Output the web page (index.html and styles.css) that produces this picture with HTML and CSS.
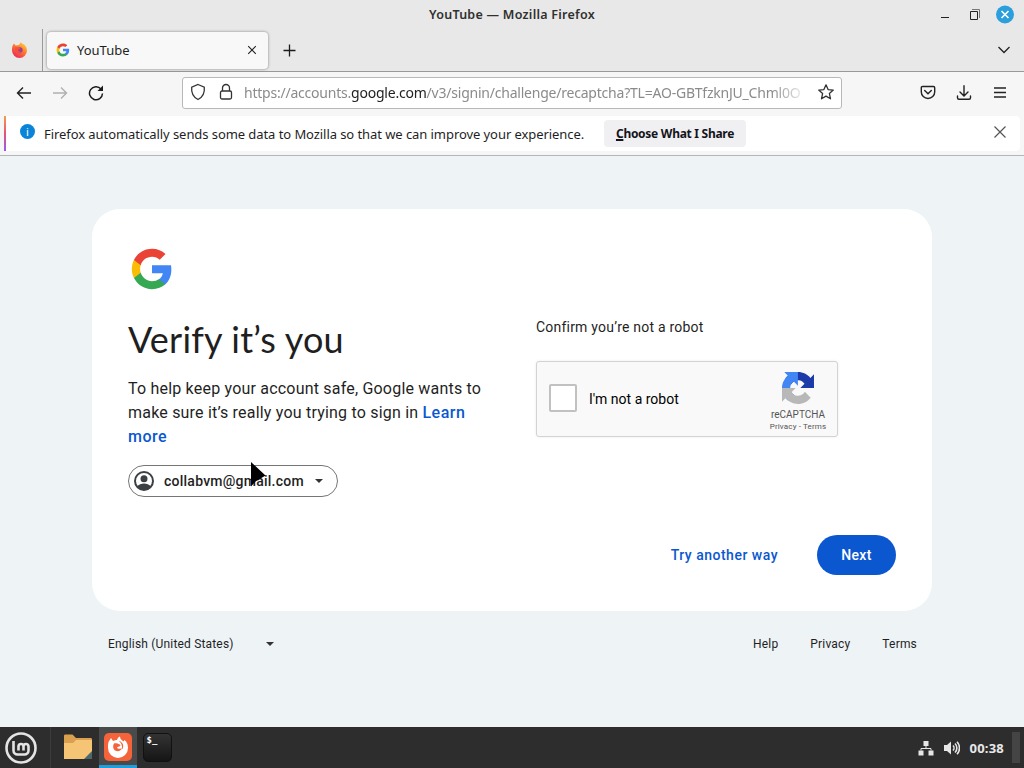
FILE: index.html
```html
<!DOCTYPE html>
<html lang="en">
<head>
  <meta charset="UTF-8" />
  <meta name="viewport" content="width=device-width, initial-scale=1.0" />
  <title>YouTube</title>
  <link rel="stylesheet" href="styles.css">
</head>
<body>
  <!-- Shared logo -->
  <svg width="0" height="0" class="defs">
    <symbol id="g-logo" viewBox="0 0 48 48">
      <path fill="#4285F4" d="M45.12 24.5c0-1.56-.14-3.06-.4-4.5H24v8.51h11.84c-.51 2.75-2.06 5.08-4.39 6.64v5.52h7.11c4.16-3.83 6.56-9.47 6.56-16.17z"/>
      <path fill="#34A853" d="M24 46c5.94 0 10.92-1.97 14.56-5.33l-7.11-5.52c-1.97 1.32-4.49 2.1-7.45 2.1-5.73 0-10.58-3.87-12.31-9.07H4.34v5.7C7.96 41.07 15.4 46 24 46z"/>
      <path fill="#FBBC05" d="M11.69 28.18C11.25 26.86 11 25.45 11 24s.25-2.86.69-4.18v-5.7H4.34C2.85 17.09 2 20.45 2 24s.85 6.91 2.34 9.88l7.35-5.7z"/>
      <path fill="#EA4335" d="M24 10.75c3.23 0 6.13 1.11 8.41 3.29l6.31-6.31C34.91 4.18 29.93 2 24 2 15.4 2 7.96 6.93 4.34 14.12l7.35 5.7c1.73-5.2 6.58-9.07 12.31-9.07z"/>
    </symbol>
  </svg>

  <header class="titlebar">
    <span class="window-title">YouTube — Mozilla Firefox</span>
    <div class="window-controls">
      <svg width="10" height="20" viewBox="0 0 10 20"><path d="M1 12.500h8" stroke="#222"/></svg>
      <svg width="12" height="20" viewBox="0 0 12 20" fill="none" stroke="#222"><path d="M1.500 6.500h7v8h-7z"/><path d="M3 4.500h7.500V13" stroke="#777"/></svg>
      <svg width="18" height="20" viewBox="0 0 18 20"><circle cx="9" cy="9.500" r="9" fill="#2b9fdc"/><path d="M5.500 6l7 7m0-7l-7 7" stroke="#fff" stroke-width="1.600"/></svg>
    </div>
  </header>

  <nav class="tabbar">
    <div class="pinned">
      <svg width="17" height="16" viewBox="0 0 17 16">
        <defs><linearGradient id="fx" x1=".9" y1="0" x2=".2" y2="1"><stop offset="0" stop-color="#ffdc3e"/><stop offset=".45" stop-color="#ff7a2e"/><stop offset="1" stop-color="#e9205f"/></linearGradient></defs>
        <path d="M1.500 4L3 1.500l1.500 2L8 3l1.500-2.500C13.500 2 16 5 16 8.500a7.500 7.500 0 0 1-15 0C1 6.500 1.200 5 1.500 4z" fill="url(#fx)"/>
        <circle cx="8.800" cy="8" r="2.800" fill="#9a3f92"/>
        <path d="M4 5.500c2-.6 4-.2 5.500 1L7 8c.5 1.500 2 1.500 3 1-1 2-5 2-6-1z" fill="#f4503c"/>
      </svg>
    </div>
    <div class="tab">
      <svg width="14" height="14"><use href="#g-logo"/></svg>
      <span class="tab-name">YouTube</span>
      <svg width="10" height="10" viewBox="0 0 10 10"><path d="M1.200 1.200l7.600 7.600m0-7.600L1.200 8.800" stroke="#222" stroke-width="1.100"/></svg>
    </div>
    <svg class="new-tab" width="13" height="13" viewBox="0 0 13 13"><path d="M6.500.5v12M.5 6.500h12" stroke="#1b1b1b" stroke-width="1.300"/></svg>
    <svg class="all-tabs" width="14" height="8" viewBox="0 0 14 8"><path d="M1.500 1l5.500 5.500L12.500 1" fill="none" stroke="#222" stroke-width="1.300"/></svg>
  </nav>

  <div class="toolbar">
    <div class="nav-buttons">
      <svg width="16" height="16" viewBox="0 0 16 16" fill="none" stroke="#222" stroke-width="1.400"><path d="M15 8H1.500M7 2.500L1.500 8 7 13.500"/></svg>
      <svg width="16" height="16" viewBox="0 0 16 16" fill="none" stroke="#b0b0b0" stroke-width="1.400"><path d="M1 8h13.500M9 2.500L14.500 8 9 13.500"/></svg>
      <svg width="16" height="16" viewBox="0 0 16 16" fill="none" stroke="#1b1b1b" stroke-width="1.500"><path d="M13 4.100A6.500 6.500 0 1 0 14.500 8.500"/><path d="M15 .5V6H9.500z" fill="#1b1b1b" stroke="none"/></svg>
    </div>
    <div class="urlbar">
      <svg width="16" height="18" viewBox="0 0 16 18"><path d="M8 1.500l6.300 2.600c.5 5-1.500 10-6.300 12.400C3.200 14.100 1.200 9.100 1.700 4.100z" fill="none" stroke="#333" stroke-width="1.300"/></svg>
      <svg width="14" height="18" viewBox="0 0 14 18" fill="none" stroke="#333" stroke-width="1.300"><rect x="1.500" y="8" width="11" height="8" rx="1.500"/><path d="M3.500 8V5a3.500 3.500 0 0 1 7 0v3"/></svg>
      <div class="url">https://accounts.<b>google.com</b>/v3/signin/challenge/recaptcha?TL=AO-GBTfzknJU_Chml0O</div>
      <svg width="18" height="18" viewBox="0 0 18 18"><path d="M9 1.800l2.100 4.800 5.200.5-3.900 3.500 1.100 5.200L9 13.100l-4.500 2.700 1.100-5.200-3.900-3.500 5.200-.5z" fill="none" stroke="#333" stroke-width="1.300" stroke-linejoin="round"/></svg>
    </div>
    <div class="tool-buttons">
      <svg width="16" height="16" viewBox="0 0 16 16" fill="none" stroke="#222" stroke-width="1.400" stroke-linecap="round"><path d="M2.500 1.500h11c.7 0 1.200.5 1.200 1.200V7a6.700 6.500 0 0 1-13.400 0V2.700C1.300 2 1.800 1.500 2.500 1.500z"/><path d="M4.700 5.500L8 8.700l3.300-3.200"/></svg>
      <svg width="16" height="16" viewBox="0 0 16 16" fill="none" stroke="#222" stroke-width="1.400" stroke-linecap="round"><path d="M8 .8v10M4 7l4 4 4-4"/><path d="M1.500 11v1.800c0 .9.600 1.500 1.500 1.500h10c.9 0 1.500-.6 1.500-1.500V11"/></svg>
      <svg width="16" height="16" viewBox="0 0 16 16" stroke="#222" stroke-width="1.400"><path d="M2 3h12M2 7.500h12M2 12h12"/></svg>
    </div>
  </div>

  <div class="notice">
    <div class="notice-inner">
      <span class="info">i</span>
      <span class="notice-text">Firefox automatically sends some data to Mozilla so that we can improve your experience.</span>
      <button class="choose"><u>C</u>hoose What I Share</button>
      <svg class="notice-close" width="12" height="12" viewBox="0 0 12 12"><path d="M.5.500l11 11m0-11l-11 11" stroke="#555" stroke-width="1.200"/></svg>
    </div>
  </div>

  <main class="page">
    <section class="card">
      <svg class="logo" width="48" height="48" viewBox="0 0 48 48"><use href="#g-logo" x="2" y="2" width="44" height="44"/></svg>
      <div class="columns">
        <div class="intro">
          <h1>Verify it’s you</h1>
          <p>To help keep your account safe, Google wants to<br>make sure it’s really you trying to sign in <a>Learn<br>more</a></p>
          <div class="account">
            <svg width="20" height="20" viewBox="0 0 20 20"><circle cx="10" cy="10" r="9" fill="none" stroke="#3c4043" stroke-width="2"/><circle cx="10" cy="7.800" r="3.500" fill="#3c4043"/><path d="M3 15.500c3.500-4 10.500-4 14 0C13.500 20.200 6.500 20.200 3 15.500z" fill="#3c4043"/></svg>
            <span class="email">collabvm@gmail.com</span>
            <i class="caret"></i>
          </div>
        </div>
        <div class="challenge">
          <div class="confirm">Confirm you’re not a robot</div>
          <div class="captcha">
            <span class="checkbox"></span>
            <span class="captcha-label">I'm not a robot</span>
            <div class="captcha-brand">
              <svg width="32" height="32" viewBox="0 0 64 64">
                <path fill="#1c3aa9" d="M64 31.955l-.033-1.370V4.687l-7.160 7.160C50.948 4.674 42.033.093 32.050.093c-10.400 0-19.622 4.960-25.458 12.640l11.736 11.860a15.550 15.550 0 0 1 4.754-5.334c2.050-1.600 4.952-2.906 8.968-2.906.485 0 .86.057 1.135.163 4.976.393 9.288 3.140 11.828 7.124l-8.307 8.307L64 31.953"/>
                <path fill="#4285f4" d="M31.862.094l-1.370.033H4.594l7.160 7.160C4.580 13.147 0 22.060 0 32.046c0 10.400 4.960 19.622 12.640 25.458L24.500 45.768a15.550 15.550 0 0 1-5.334-4.754c-1.600-2.050-2.906-4.952-2.906-8.968 0-.485.057-.86.163-1.135.393-4.976 3.140-9.288 7.124-11.828l8.307 8.307L31.860.095"/>
                <path fill="#b8b8b8" d="M.001 32.045l.033 1.370v25.898l7.160-7.160c5.860 7.173 14.774 11.754 24.760 11.754 10.400 0 19.622-4.960 25.458-12.640l-11.736-11.860a15.550 15.550 0 0 1-4.754 5.334c-2.050 1.600-4.952 2.906-8.968 2.906-.485 0-.86-.057-1.135-.163-4.976-.393-9.288-3.140-11.828-7.124l8.307-8.307c-10.522.040-22.400.066-27.295-.005"/>
              </svg>
              <span class="brand-name">reCAPTCHA</span>
              <span class="brand-links">Privacy - Terms</span>
            </div>
          </div>
        </div>
      </div>
      <div class="actions">
        <a class="another">Try another way</a>
        <button class="next">Next</button>
      </div>
    </section>
    <footer class="footer">
      <div class="language">English (United States)<i class="caret"></i></div>
      <div class="links"><a>Help</a><a>Privacy</a><a>Terms</a></div>
    </footer>
  </main>

  <div class="taskbar">
    <div class="menu">
      <svg width="32" height="32" viewBox="0 0 32 32" fill="none" stroke="#e4e4e4"><circle cx="16" cy="16" r="14.500" stroke-width="2.600"/><path d="M8.500 9v9.500a4 4 0 0 0 4 4h7a4 4 0 0 0 4-4V14.500a2.500 2.500 0 0 0-5 0V18.500M18.500 18.500V14.500a2.500 2.500 0 0 0-5 0V18.500" stroke-width="2.600"/></svg>
    </div>
    <div class="task files">
      <svg width="28" height="26" viewBox="0 0 28 26"><path d="M0 2c0-1 .5-1.500 1.500-1.500h7L12 4h14.500c1 0 1.500.5 1.500 1.500V25H0z" fill="#d9a050"/><path d="M0 9h9l3-3h16v19H0z" fill="#f5c474"/><path d="M28 17v8h-8z" fill="#4c686a"/></svg>
    </div>
    <div class="task active">
      <svg width="28" height="28" viewBox="0 0 28 28"><rect width="28" height="28" rx="5" fill="#f4633a"/><path d="M4.500 9L7 5l2 3c2-1 3-.8 4-1 .5-2 1.500-3 3-3.500 0 2.500 2 3.500 3.500 5L20.500 7C23 9 24 11.500 24 15a10 10 0 0 1-20 0c0-2.500 0-4 .5-6z" fill="#fff"/><path d="M10 10.500c3-.8 5.500.2 6.500 2-.5 1.300-2.500 1-3.500 2 .5 1.700 3 1.700 4.500.5-.5 4-6.500 4.500-8 .5-.6-2-.4-3.500.5-5z" fill="#f4633a"/><path d="M14.500 7.500c4.500 1.500 6.500 6 3 9.500 1.300-4 0-7-3-9.500z" fill="#f4633a"/></svg>
    </div>
    <div class="task">
      <div class="terminal">$_</div>
    </div>
    <div class="tray">
      <svg width="16" height="16" viewBox="0 0 16 16" fill="#e6e6e6"><path d="M5.500 1h5v5h-5zM.5 10.500h5v5h-5zM10.500 10.500h5v5h-5z"/><path d="M8 6v2.500M3 10.500v-2h10v2" fill="none" stroke="#e6e6e6"/></svg>
      <svg width="16" height="16" viewBox="0 0 16 16" fill="#e6e6e6"><path d="M0 5h3l4-3.500v13L3 11H0z"/><path d="M9 5.500c1.300 1.300 1.300 3.700 0 5M11 3.500c2.500 2.500 2.500 6.500 0 9M13 1.800c3.300 3.400 3.300 9 0 12.400" fill="none" stroke="#e6e6e6" stroke-width="1.600"/></svg>
      <span class="clock">00:38</span>
      <span class="desktop"></span>
    </div>
  </div>

  <svg class="cursor" width="18" height="26" viewBox="0 0 18 26"><path d="M1 0v24.500l4.500-5L15.500 13.500z"/></svg>
</body>
</html>
```
FILE: styles.css
```css
* {
  box-sizing: border-box;
}
body {
  margin: 0;
  width: 1024px;
  height: 768px;
  overflow: hidden;
  display: flex;
  flex-direction: column;
  position: relative;
  font-family: "Noto Sans", "Open Sans", sans-serif;
  color: #1f1f1f;
}
svg {
  display: block;
  flex: none;
}
button {
  border: none;
  padding: 0;
}
.defs {
  position: absolute;
}

/* Window frame */
.titlebar {
  height: 29px;
  background: #e8e8e8;
  display: grid;
  grid-template-columns: 1fr auto 1fr;
  align-items: center;
}
.window-title {
  grid-column: 2;
  font-size: 12.5px;
  font-weight: 600;
  letter-spacing: 0.26px;
  color: #303030;
}
.window-controls {
  justify-self: end;
  display: flex;
  gap: 15px;
  padding-right: 10px;
}
.window-controls svg:first-child {
  margin-right: 4px;
}
.tabbar {
  height: 43px;
  background: #e8e8e8;
  border-bottom: 1px solid #999;
  display: flex;
  align-items: center;
}
.pinned {
  width: 43px;
  height: 100%;
  padding-left: 11px;
  display: flex;
  align-items: center;
  border-right: 1px solid #999;
}
.tab {
  width: 221px;
  height: 37px;
  margin-left: 4px;
  padding: 0 11px 0 9px;
  display: flex;
  align-items: center;
  background: #f8f8f8;
  border-radius: 4px;
  box-shadow: 0 0 3px rgba(0,0,0,0.45);
}
.tab-name {
  flex: 1;
  padding-left: 7px;
  font-size: 13px;
}
.new-tab {
  margin-left: 15px;
}
.all-tabs {
  margin-left: auto;
  margin-right: 13px;
}

/* Navigation */
.toolbar {
  height: 43px;
  background: #f6f6f6;
  display: flex;
  align-items: center;
  padding: 0 16px 2px;
}
.nav-buttons {
  width: 166px;
  display: flex;
  gap: 20px;
}
.urlbar {
  width: 660px;
  height: 32px;
  padding: 0 5px 2px 7px;
  display: flex;
  align-items: center;
  background: #fff;
  border: 1px solid #b8b8b8;
  border-radius: 3px;
}
.urlbar svg + svg {
  margin-left: 13px;
}
.url {
  width: 564px;
  margin: 0 9px 0 11px;
  padding-top: 2px;
  overflow: hidden;
  white-space: nowrap;
  font-size: 14px;
  letter-spacing: -0.22px;
  color: #8b8b8b;
  mask-image: linear-gradient(to left, transparent, #000 36px);
}
.url b {
  font-weight: 400;
  color: #222;
}
.tool-buttons {
  margin-left: auto;
  display: flex;
  gap: 20px;
}

/* Data notice */
.notice {
  height: 41px;
  background: #f6f6f6;
  border-bottom: 1px solid #b5b5b5;
  padding: 1px 4px 4px;
}
.notice-inner {
  height: 35px;
  display: flex;
  align-items: center;
  background: #fff;
  border-radius: 4px;
  border-left: 2px solid;
  border-image: linear-gradient(#f7a04b, #e25577, #9059ff) 1;
  padding-left: 14px;
}
.info {
  width: 15px;
  height: 15px;
  margin-bottom: 4px;
  border-radius: 50%;
  background: #0a84d8;
  color: #fff;
  font-size: 11px;
  line-height: 15px;
  text-align: center;
}
.notice-text {
  width: 560px;
  padding-left: 9px;
  font-size: 13px;
  letter-spacing: -0.07px;
  white-space: nowrap;
}
.choose {
  width: 142px;
  height: 27px;
  margin-left: 9px;
  background: #f0f0f2;
  border-radius: 4px;
  font: 700 12px "Noto Sans", sans-serif;
  letter-spacing: -0.28px;
  color: #15141a;
}
.choose u {
  text-decoration-thickness: 2px;
}
.notice-close {
  margin: 0 14px 3px auto;
}

/* Sign-in page */
.page {
  flex: 1;
  padding: 53px 92px 0;
  background: #eef3f6;
  font-family: Roboto, sans-serif;
}
.card {
  height: 402px;
  padding: 36px;
  display: flex;
  flex-direction: column;
  background: #fff;
  border-radius: 28px;
}
.columns {
  display: grid;
  grid-template-columns: 360px 360px;
  gap: 48px;
  padding-top: 24px;
}
h1 {
  margin: 0 0 16px;
  font: 400 36px/44px Lato, sans-serif;
  letter-spacing: 0.2px;
}
.intro p {
  margin: 0 0 16px;
  font-size: 16px;
  line-height: 24px;
  letter-spacing: 0.2px;
  white-space: nowrap;
}
.intro a,
.another {
  color: #0b57d0;
  font-weight: 500;
  letter-spacing: 0.5px;
}
.account {
  width: 210px;
  height: 32px;
  padding: 0 14px 0 5px;
  display: flex;
  align-items: center;
  border: 1px solid #747775;
  border-radius: 16px;
}
.email {
  flex: 1;
  padding-left: 10px;
  font-size: 14px;
  font-weight: 500;
  letter-spacing: 0.24px;
}
.caret {
  border: 4px solid transparent;
  border-top-color: #333;
  border-bottom: 0;
}
.confirm {
  font-size: 14px;
  line-height: 20px;
  letter-spacing: 0.21px;
  margin-bottom: 24px;
}
.captcha {
  width: 302px;
  height: 76px;
  padding: 0 7px 0 12px;
  display: flex;
  align-items: center;
  background: #f9f9f9;
  border: 1px solid #d3d3d3;
  border-radius: 3px;
  box-shadow: 0 0 3px rgba(0,0,0,0.08);
}
.checkbox {
  width: 28px;
  height: 28px;
  margin-bottom: 2px;
  background: #fff;
  border: 2px solid #c1c1c1;
  border-radius: 2px;
}
.captcha-label {
  flex: 1;
  padding-left: 12px;
  font-size: 14px;
  color: #000;
}
.captcha-brand {
  width: 64px;
  padding-top: 5px;
  display: flex;
  flex-direction: column;
  align-items: center;
  color: #555;
}
.brand-name {
  margin-top: 4px;
  font-size: 10px;
  line-height: 13px;
}
.brand-links {
  font-size: 8px;
  line-height: 11px;
  letter-spacing: 0.15px;
}
.actions {
  margin-top: auto;
  display: flex;
  justify-content: flex-end;
  align-items: center;
  gap: 39px;
  font-size: 14px;
}
.next {
  width: 79px;
  height: 40px;
  border-radius: 20px;
  background: #0b57d0;
  color: #fff;
  font: 500 14px Roboto, sans-serif;
  letter-spacing: 0.3px;
}
.footer {
  padding: 25px 15px 0 16px;
  display: flex;
  justify-content: space-between;
  font-size: 12px;
  line-height: 16px;
  letter-spacing: 0.18px;
}
.language {
  width: 166px;
  display: flex;
  align-items: center;
  justify-content: space-between;
}
.links {
  display: flex;
  gap: 32px;
}

/* Desktop panel */
.taskbar {
  height: 41px;
  display: flex;
  background: #2d2d2d;
}
.menu {
  width: 51px;
  padding: 5px 0 0 5px;
  border-right: 1px solid #3c3c3c;
}
.task {
  width: 38px;
  display: flex;
  align-items: center;
  justify-content: center;
  margin-right: 1px;
}
.task.files {
  margin-left: 8px;
  margin-right: 2px;
  padding-bottom: 2px;
}
.task.active {
  background: #4a4a4a;
  border-bottom: 3px solid #1f9ede;
  padding-top: 2px;
}
.terminal {
  width: 29px;
  height: 29px;
  padding-left: 3px;
  border: 1px solid #111;
  border-radius: 5px;
  background: linear-gradient(#333, #151515);
  color: #fff;
  font: 700 9px/12px "DejaVu Sans Mono", monospace;
}
.tray {
  margin-left: auto;
  display: flex;
  align-items: center;
  gap: 10px;
}
.clock {
  color: #e8e8e8;
  font-size: 13px;
  font-weight: 700;
  letter-spacing: 0.2px;
  margin-right: -2px;
}
.desktop {
  width: 8px;
  height: 31px;
  margin-right: 4px;
  background: #444;
}
.cursor {
  position: absolute;
  left: 250px;
  top: 462px;
}
```
